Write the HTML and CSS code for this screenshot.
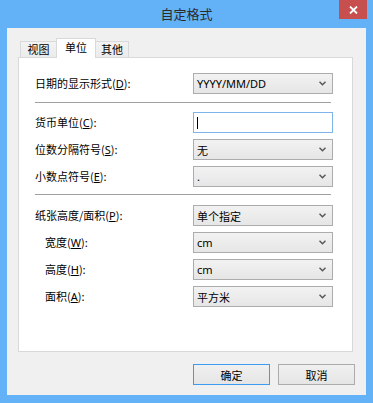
FILE: index.html
```html
<!DOCTYPE html>
<html>

<head>
  <meta charset="UTF-8">
  <title>自定格式</title>
  <link rel="stylesheet" href="styles.css">
</head>

<body>

  <div class="window">
    <div class="titlebar">
      <span></span>
      <span class="title">自定格式</span>
      <div class="close-btn">
        <svg width="9" height="8" viewBox="0 0 9 8"><path d="M1 0.5 L8 7.5 M8 0.5 L1 7.5" stroke="#fff" stroke-width="1.8"/></svg>
      </div>
    </div>

    <div class="client">
      <div class="tabs">
        <div class="tab" style="width: 36px;">视图</div>
        <div class="tab active" style="width: 40px;">单位</div>
        <div class="tab" style="width: 33px;">其他</div>
      </div>

      <div class="panel">
        <div class="form">
          <label>日期的显示形式(<u>D</u>):</label>
          <div class="combo"><span>YYYY/MM/DD</span><svg class="chev" width="7" height="5" viewBox="0 0 7 5"><path d="M0.5 0.8 L3.5 3.8 L6.5 0.8" fill="none" stroke="#555" stroke-width="1.4"/></svg></div>

          <div class="separator"></div>

          <label>货币单位(<u>C</u>):</label>
          <div class="textbox"><span class="caret"></span></div>

          <label>位数分隔符号(<u>S</u>):</label>
          <div class="combo"><span>无</span><svg class="chev" width="7" height="5" viewBox="0 0 7 5"><path d="M0.5 0.8 L3.5 3.8 L6.5 0.8" fill="none" stroke="#555" stroke-width="1.4"/></svg></div>

          <label>小数点符号(<u>E</u>):</label>
          <div class="combo"><span>.</span><svg class="chev" width="7" height="5" viewBox="0 0 7 5"><path d="M0.5 0.8 L3.5 3.8 L6.5 0.8" fill="none" stroke="#555" stroke-width="1.4"/></svg></div>

          <div class="separator sep-2"></div>

          <label>纸张高度/面积(<u>P</u>):</label>
          <div class="combo"><span>单个指定</span><svg class="chev" width="7" height="5" viewBox="0 0 7 5"><path d="M0.5 0.8 L3.5 3.8 L6.5 0.8" fill="none" stroke="#555" stroke-width="1.4"/></svg></div>

          <label class="indent">宽度(<u>W</u>):</label>
          <div class="combo"><span>cm</span><svg class="chev" width="7" height="5" viewBox="0 0 7 5"><path d="M0.5 0.8 L3.5 3.8 L6.5 0.8" fill="none" stroke="#555" stroke-width="1.4"/></svg></div>

          <label class="indent">高度(<u>H</u>):</label>
          <div class="combo"><span>cm</span><svg class="chev" width="7" height="5" viewBox="0 0 7 5"><path d="M0.5 0.8 L3.5 3.8 L6.5 0.8" fill="none" stroke="#555" stroke-width="1.4"/></svg></div>

          <label class="indent">面积(<u>A</u>):</label>
          <div class="combo"><span>平方米</span><svg class="chev" width="7" height="5" viewBox="0 0 7 5"><path d="M0.5 0.8 L3.5 3.8 L6.5 0.8" fill="none" stroke="#555" stroke-width="1.4"/></svg></div>
        </div>
      </div>

      <div class="buttons">
        <button class="btn default">确定</button>
        <button class="btn">取消</button>
      </div>
    </div>
  </div>

</body>

</html>
```

FILE: styles.css
```css
body * {
  box-sizing: border-box;
}

body {
  margin: 0;
  font-family: "Noto Sans", "Noto Sans CJK SC", sans-serif;
  font-size: 11px;
  color: #000;
}

.window {
  width: 373px;
  height: 403px;
  display: flex;
  flex-direction: column;
  background: #63b1f6;
}

.titlebar {
  height: 28px;
  flex: 0 0 28px;
  display: grid;
  grid-template-columns: 1fr auto 1fr;
}

.title {
  align-self: center;
  font-family: "Noto Sans CJK SC", sans-serif;
  font-size: 13px;
  color: #2b2b2b;
  line-height: 28px;
}

.close-btn {
  justify-self: end;
  width: 28px;
  height: 19px;
  margin-right: 6px;
  background: #c7504f;
  display: flex;
  align-items: center;
  justify-content: center;
}

.client {
  flex: 1;
  margin: 0 7px 8px;
  padding: 10px 0 10px 11px;
  background: #f0f0f0;
  display: flex;
  flex-direction: column;
}

.tabs {
  display: flex;
  align-items: flex-end;
  height: 20px;
  margin: 0 13px -1px 0;
  padding-left: 2px;
}

.tab {
  height: 17px;
  border: 1px solid #d9d9d9;
  border-right: none;
  background: linear-gradient(#f3f3f3, #ebebeb);
  text-align: center;
  line-height: 15px;
  font-family: "Noto Sans CJK SC", sans-serif;
}

.tab:last-child {
  border-right: 1px solid #d9d9d9;
}

.tab.active {
  position: relative;
  z-index: 1;
  height: 20px;
  border-right: 1px solid #d9d9d9;
  border-bottom: none;
  background: #fff;
  line-height: 17px;
}

.tab.active + .tab {
  border-left: none;
}

.panel {
  position: relative;
  flex: 1;
  margin-right: 13px;
  border: 1px solid #d9d9d9;
  background: #fff;
  padding: 15px 0 0 16px;
}

.form {
  display: grid;
  grid-template-columns: 158px 140px;
  row-gap: 6px;
  align-items: center;
}

.form label {
  line-height: 21px;
  font-family: "Noto Sans CJK SC", sans-serif;
  user-select: none;
}

.form label.indent {
  padding-left: 10px;
}

.form u {
  font-family: "Noto Sans", sans-serif;
}

.separator {
  grid-column: 1 / -1;
  width: 296px;
  height: 1px;
  margin: 2px 0 3px;
  background: #a0a0a0;
}

.separator.sep-2 {
  margin: 1px 0 4px;
}

.combo {
  height: 21px;
  border: 1px solid #acacac;
  background: linear-gradient(#f2f2f2, #e6e6e6);
  display: flex;
  align-items: center;
  justify-content: space-between;
  padding: 0 6px 0 3px;
  font-family: "Noto Sans", "Noto Sans CJK SC", sans-serif;
}

.textbox {
  height: 21px;
  border: 1px solid #7eb4ea;
  background: #fff;
  display: flex;
  align-items: center;
  padding-left: 3px;
}

.caret {
  width: 1px;
  height: 12px;
  background: #000;
}

.buttons {
  display: flex;
  justify-content: flex-end;
  gap: 8px;
  margin-top: 12px;
  margin-right: 11px;
}

.btn {
  width: 77px;
  height: 21px;
  padding: 0;
  border: 1px solid #acacac;
  background: linear-gradient(#f0f0f0, #e5e5e5);
  font-family: "Noto Sans CJK SC", sans-serif;
  font-size: 11px;
  color: #000;
}

.btn.default {
  border-color: #3c9cf0;
}
```
